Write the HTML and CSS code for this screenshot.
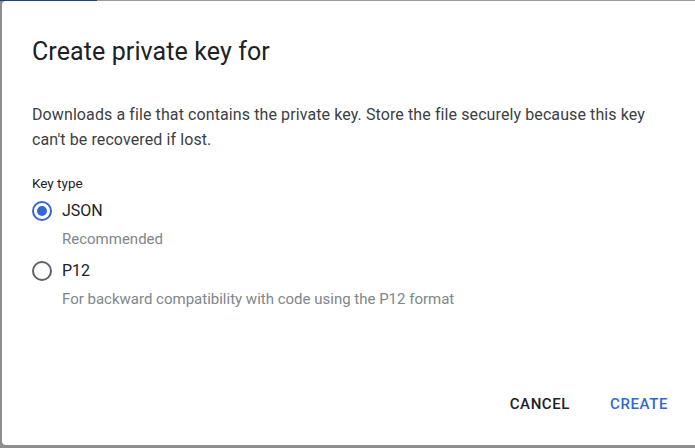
FILE: index.html
```html
<!DOCTYPE html>
<html>
<head>
<meta charset="utf-8">
<link rel="stylesheet" href="styles.css">
</head>
<body>
<div class="backdrop">
  <div class="topbar"><span class="topbar-blue"></span></div>
  <div class="dialog">
    <h1 class="title">Create private key for</h1>
    <p class="desc">Downloads a file that contains the private key. Store the file securely because this key can't be recovered if lost.</p>
    <div class="field-label">Key type</div>
    <div class="options">
      <label class="option">
        <span class="radio checked"><span class="dot"></span></span>
        <span class="option-text">
          <span class="option-name">JSON</span>
          <span class="option-hint">Recommended</span>
        </span>
      </label>
      <label class="option">
        <span class="radio"></span>
        <span class="option-text">
          <span class="option-name">P12</span>
          <span class="option-hint">For backward compatibility with code using the P12 format</span>
        </span>
      </label>
    </div>
    <div class="actions">
      <button class="btn">CANCEL</button>
      <button class="btn primary">CREATE</button>
    </div>
  </div>
</div>
</body>
</html>
```
FILE: styles.css
```css
html, body {
  margin: 0;
  padding: 0;
  height: 100%;
}
body {
  background: #8e8e8e;
  font-family: Roboto, "Liberation Sans", Arial, sans-serif;
  overflow: hidden;
}
.backdrop {
  display: flex;
  flex-direction: column;
  height: 448px;
}
.topbar {
  height: 1px;
  background: #9b9b9b;
  display: flex;
}
.topbar-blue {
  width: 97px;
  background: #1d3f8f;
}
.dialog {
  margin-left: 2px;
  height: 444px;
  background: #ffffff;
  border-radius: 4px 0 0 4px;
  box-sizing: border-box;
  padding: 35px 15px 0 30px;
  display: flex;
  flex-direction: column;
}
.title {
  margin: 0;
  font-size: 25px;
  font-weight: 400;
  color: #202124;
  line-height: 32px;
  letter-spacing: 0.1px;
}
.desc {
  margin: 34px 0 0 0;
  font-size: 16px;
  line-height: 25px;
  letter-spacing: 0.1px;
  color: #3c4043;
  max-width: 625px;
}
.field-label {
  margin-top: 22px;
  font-size: 13.5px;
  line-height: 18px;
  color: #202124;
}
.options {
  display: flex;
  flex-direction: column;
  gap: 11px;
  margin-top: 8px;
}
.option {
  display: flex;
  gap: 10px;
  align-items: flex-start;
}
.radio {
  width: 20px;
  height: 20px;
  box-sizing: border-box;
  border: 2px solid #5f6368;
  border-radius: 50%;
  display: flex;
  align-items: center;
  justify-content: center;
  flex: none;
  margin-top: 1px;
}
.radio.checked {
  border-color: #3367d6;
}
.dot {
  width: 10px;
  height: 10px;
  border-radius: 50%;
  background: #3367d6;
}
.option-text {
  display: flex;
  flex-direction: column;
}
.option-name {
  font-size: 16px;
  line-height: 22px;
  color: #202124;
}
.option-hint {
  margin-top: 7px;
  font-size: 15px;
  line-height: 20px;
  color: #80868b;
}
.actions {
  margin-top: auto;
  margin-bottom: 23px;
  display: flex;
  justify-content: flex-end;
  gap: 16px;
}
.btn {
  border: none;
  background: none;
  font-family: Roboto, "Liberation Sans", Arial, sans-serif;
  font-size: 15px;
  font-weight: 500;
  letter-spacing: 0.6px;
  color: #202124;
  padding: 8px 12px;
  line-height: 20px;
}
.btn.primary {
  color: #3367d6;
}
```
